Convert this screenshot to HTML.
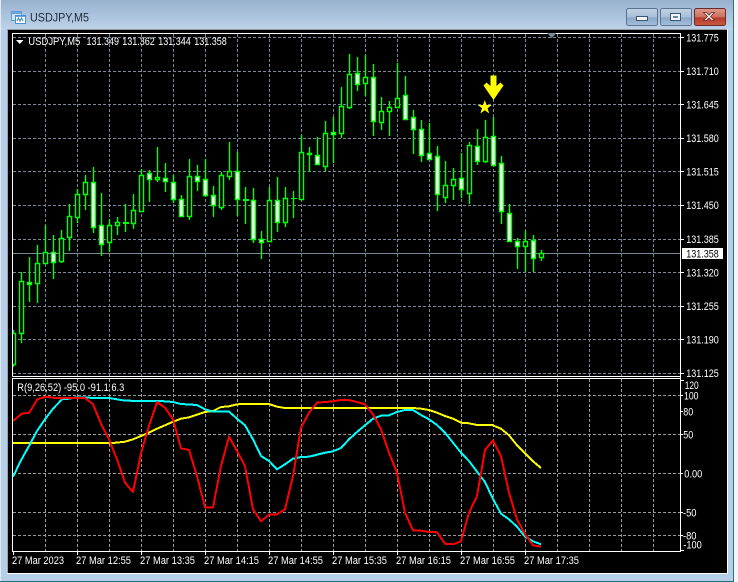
<!DOCTYPE html>
<html><head><meta charset="utf-8"><title>USDJPY,M5</title>
<style>
html,body{margin:0;padding:0;background:#fff;width:738px;height:582px;overflow:hidden}
svg{display:block;position:absolute;left:0;top:0}
text{font-family:"Liberation Sans",sans-serif}
</style></head><body>
<svg width="738" height="582" viewBox="0 0 738 582" xmlns="http://www.w3.org/2000/svg">
<defs>
<linearGradient id="tb" x1="0" y1="0" x2="0" y2="1"><stop offset="0" stop-color="#97b1ce"/><stop offset="1" stop-color="#bed3e9"/></linearGradient>
<linearGradient id="btn" x1="0" y1="0" x2="0" y2="1"><stop offset="0" stop-color="#c3d3e5"/><stop offset=".5" stop-color="#a8bfd8"/><stop offset=".55" stop-color="#8ba8c8"/><stop offset="1" stop-color="#a5bfdc"/></linearGradient>
<linearGradient id="cls" x1="0" y1="0" x2="0" y2="1"><stop offset="0" stop-color="#dc9c8f"/><stop offset=".5" stop-color="#cd6f5f"/><stop offset=".55" stop-color="#b83a28"/><stop offset="1" stop-color="#c85a44"/></linearGradient>
<clipPath id="cm"><rect x="13" y="34" width="667" height="342"/></clipPath>
<clipPath id="cl"><rect x="13" y="379" width="667" height="172"/></clipPath>
</defs>

<!-- window frame -->
<rect x="0" y="0" width="734" height="582" fill="#b6cfe9"/>
<rect x="0" y="0" width="734" height="30" fill="url(#tb)"/>
<rect x="0" y="0" width="1" height="582" fill="#e4e9ef"/>
<rect x="733" y="0" width="1" height="582" fill="#2f6f80"/>
<rect x="734" y="0" width="4" height="582" fill="#f4f6f8"/>
<rect x="0" y="581" width="734" height="1" fill="#1f6f80"/>
<rect x="7" y="29" width="721" height="1" fill="#8f979f"/>
<rect x="7" y="29" width="1" height="545" fill="#9aa3ac"/>
<rect x="7" y="573" width="721" height="1" fill="#fff"/>
<rect x="727" y="29" width="1" height="545" fill="#fff"/>
<rect x="8" y="30" width="719" height="543" fill="#000"/>

<!-- title icon -->
<rect x="11.500" y="11.500" width="10" height="9" fill="#cfe2f5" stroke="#5f9ad6"/>
<rect x="15.500" y="15.500" width="10" height="8" fill="#fff" stroke="#4a8fd4"/>
<path d="M17 21l1.500-3 1.500 3 1.500-3 1.500 3" fill="none" stroke="#3b7fc4"/>
<rect x="12" y="12" width="9" height="2" fill="#6ea6dc"/>
<rect x="16" y="16" width="9" height="1" fill="#6ea6dc"/>
<text x="30" y="21.500" font-size="12" fill="#1c2c3e" textLength="59" lengthAdjust="spacingAndGlyphs">USDJPY,M5</text>

<!-- window buttons -->
<rect x="626.500" y="8.500" width="31" height="17" rx="2" fill="url(#btn)" stroke="#5a7391"/>
<rect x="636.500" y="16.500" width="11" height="4" fill="#f2f5f8" stroke="#3f5670"/>
<rect x="660.500" y="8.500" width="31" height="17" rx="2" fill="url(#btn)" stroke="#5a7391"/>
<rect x="670.500" y="13.500" width="10" height="7" fill="#f2f5f8" stroke="#3f5670"/>
<rect x="673" y="16" width="5" height="2" fill="#6d87a5"/>
<rect x="694.500" y="8.500" width="31" height="17" rx="2" fill="url(#cls)" stroke="#6a2a2a"/>
<path d="M703.500 12.500l3 0 2.500 2.500 2.500-2.500 3 0-4 4 4 4-3 0-2.500-2.500-2.500 2.500-3 0 4-4z" fill="#f6f2f0" stroke="#6e2a22" stroke-width=".8"/>

<!-- main pane grid -->
<g shape-rendering="crispEdges">
<path d="M13 37.500H680M13 71.500H680M13 104.500H680M13 138.500H680M13 171.500H680M13 205.500H680M13 239.500H680M13 272.500H680M13 306.500H680M13 339.500H680M13 373.500H680" stroke="#778899" stroke-dasharray="3 2" fill="none"/>
<path d="M45.500 34V376M77.500 34V376M109.500 34V376M141.500 34V376M173.500 34V376M205.500 34V376M237.500 34V376M269.500 34V376M301.500 34V376M333.500 34V376M365.500 34V376M397.500 34V376M429.500 34V376M461.500 34V376M493.500 34V376M525.500 34V376M557.500 34V376M589.500 34V376M621.500 34V376M653.500 34V376" stroke="#778899" stroke-dasharray="3 2" fill="none"/>
<rect x="13" y="253" width="667" height="1" fill="#778899"/>
</g>

<!-- candles -->
<g clip-path="url(#cm)" stroke-width="1.400">
<path stroke="#00ff00" fill="none" d="M13.500 330V367M21.500 272V343M29.500 257V302M37.500 245V303M45.500 225V264M53.500 235V279M61.500 230V263M69.500 204V251M77.500 189V223M85.500 175V210M93.500 167V233M101.500 193V256M109.500 219V252M117.500 217V235M125.500 204V232M133.500 194V229M141.500 169V211M149.500 170V202M157.500 147V182M165.500 163V192M173.500 175V203M181.500 195V217M189.500 159V220M197.500 165V191M205.500 159V197M213.500 186V217M221.500 172V210M229.500 142V180M237.500 152V216M245.500 187V224M253.500 188V243M261.500 231V259M269.500 187V240M277.500 177V232M285.500 187V227M293.500 191V218M301.500 135V200M309.500 147V172M317.500 137V165M325.500 121V171M333.500 117V163M341.500 87V138M349.500 54V109M357.500 57V91M365.500 55V96M373.500 64V136M381.500 97V130M389.500 101V136M397.500 63V107M405.500 76V119M413.500 110V154M421.500 120V162M429.500 123V160M437.500 146V211M445.500 161V203M453.500 168V200M461.500 153V198M469.500 142V204M477.500 129V165M485.500 120V163M493.500 117V166M501.500 156V224M509.500 204V242M517.500 238V269M525.500 231V272M533.500 235V272M541.500 250V261"/>
<!-- hollow -->
<path stroke="#00ff00" fill="#000" d="M11.500 333.500h4v31h-4zM19.500 281.500h4v52h-4zM35.500 263.500h4v20h-4zM43.500 252.500h4v11h-4zM59.500 238.500h4v23h-4zM67.500 216.500h4v21h-4zM75.500 194.500h4v23h-4zM83.500 182.500h4v12h-4zM107.500 225.500h4v17h-4zM115.500 222.500h4v3h-4zM131.500 210.500h4v13h-4zM139.500 175.500h4v36h-4zM155.500 177.500h4v2h-4zM187.500 176.500h4v40h-4zM219.500 175.500h4v32h-4zM227.500 171.500h4v5h-4zM267.500 200.500h4v41h-4zM283.500 198.500h4v24h-4zM299.500 152.500h4v47h-4zM323.500 133.500h4v33h-4zM339.500 106.500h4v27h-4zM347.500 74.500h4v33h-4zM363.500 77.500h4v6h-4zM379.500 111.500h4v11h-4zM387.500 107.500h4v4h-4zM395.500 98.500h4v9h-4zM443.500 185.500h4v12h-4zM451.500 179.500h4v6h-4zM467.500 145.500h4v48h-4zM483.500 137.500h4v24h-4zM523.500 241.500h4v5h-4zM539.500 253.500h4v4h-4z"/>
<!-- white bodies -->
<path stroke="#00ff00" fill="#fff" d="M27.500 282.500h4v2h-4zM51.500 252.500h4v10h-4zM91.500 182.500h4v45h-4zM99.500 225.500h4v19h-4zM147.500 173.500h4v6h-4zM163.500 178.500h4v3h-4zM171.500 182.500h4v17h-4zM179.500 199.500h4v17h-4zM195.500 176.500h4v5h-4zM203.500 179.500h4v16h-4zM211.500 195.500h4v10h-4zM235.500 171.500h4v28h-4zM251.500 200.500h4v39h-4zM259.500 239.500h4v3h-4zM275.500 200.500h4v22h-4zM307.500 153.500h4v1h-4zM315.500 155.500h4v9h-4zM331.500 132.500h4v2h-4zM355.500 73.500h4v11h-4zM371.500 77.500h4v44h-4zM403.500 95.500h4v24h-4zM411.500 117.500h4v12h-4zM419.500 129.500h4v26h-4zM427.500 153.500h4v6h-4zM435.500 156.500h4v38h-4zM459.500 178.500h4v11h-4zM475.500 146.500h4v15h-4zM491.500 136.500h4v29h-4zM499.500 163.500h4v48h-4zM507.500 213.500h4v28h-4zM515.500 241.500h4v5h-4zM531.500 240.500h4v18h-4z"/>
<!-- doji -->
<path fill="#00ff00" stroke="none" d="M123 222h6v2h-6zM243 199h6v2h-6zM291 198h6v1h-6z"/>
</g>

<!-- arrow + star -->
<path d="M490.500 75.500H496.500V86L500.500 82.500L503.500 85.500L493.500 100L483.500 85.500L486.500 82.500L490.500 86Z" fill="#ffff00"/>
<path d="M484.800 100l1.800 5h5.200l-4.200 3.200 1.600 5.300-4.400-3.200-4.400 3.200 1.600-5.300-4.200-3.200h5.200z" fill="#ffff00"/>

<!-- lower pane grid -->
<g shape-rendering="crispEdges">
<path d="M13 395.500H680M13 434.500H680M13 473.500H680M13 512.500H680M13 535.500H680" stroke="#9a9a9a" stroke-dasharray="3 2" fill="none"/>
<path d="M45.500 379V551M77.500 379V551M109.500 379V551M141.500 379V551M173.500 379V551M205.500 379V551M237.500 379V551M269.500 379V551M301.500 379V551M333.500 379V551M365.500 379V551M397.500 379V551M429.500 379V551M461.500 379V551M493.500 379V551M525.500 379V551M557.500 379V551M589.500 379V551M621.500 379V551M653.500 379V551" stroke="#9a9a9a" stroke-dasharray="3 2" fill="none"/>
</g>

<!-- indicator lines -->
<g clip-path="url(#cl)" fill="none" stroke-width="2" stroke-linejoin="round" shape-rendering="crispEdges">
<polyline stroke="#ffff00" points="13,443 113,443 125,441.700 133,439.300 141,436 149,432.700 157,428.700 165,425.300 173,421.700 181,418.700 189,417.300 197,414.700 205,412 213,411 221,407 229,406.300 237,404.300 246,404 269,404 277,406.700 285,408 413,408 421,408.700 429,410 437,412.700 445,416 453,418.700 461,422.700 469,423.300 477,425 492,425 501,428.700 509,435.300 517,445.300 525,453.300 533,461.300 541,468"/>
<polyline stroke="#00ffff" points="13,476.700 21,460.300 29,446 37,431 45,419.300 53,408.700 62,399.300 69,398.700 77,397.300 85,397.300 93,398 109,398 117,399.300 125,400.700 157,401 165,401.300 173,402 181,404 197,405 205,409.300 213,411.700 229,411.700 237,418.700 245,425.300 253,439.300 261,456 269,461 277,469.300 285,464.300 293,458.700 301,457 309,456.700 317,454.700 325,452.700 333,451.300 341,448 349,439.300 357,432 365,425.300 373,418.700 381,415.700 389,415.300 397,412 405,410 413,410 421,415 429,419.300 437,425 445,432.700 453,442.700 461,452.700 469,461 477,471.700 485,482 493,499 501,513.700 509,519.300 517,526.700 525,536.700 533,541.300 541,544.300"/>
<polyline stroke="#ff0000" points="13,421 21.700,413.700 29.300,412.700 37.300,399.300 45.300,396.700 53,397.700 61,398.300 69,398 85,398 93,404.300 101,423.700 109,439.300 117,459.300 125,482.700 133,492 141,453.300 149,426 157,402 165,407.700 173,419.300 181,448.300 189,450 197,476 205,507.300 213,507.300 221,466 229,436.700 237,451 245,466 253,509.300 261,521.300 269,514.700 277,514.300 285,509.300 293,476 301,427.700 309,412.700 317,402.700 325,402 333,401.300 341,400 349,400 357,402 365,404.300 373,414.300 381,429.300 389,452.700 397,472.700 405,512.700 413,530.300 421,530.700 429,532 437,532 445,543.700 453,544.300 461,541.300 469,512.700 477,496 485,450 493,440.300 501,456 509,492.700 517,519.300 525,534.300 533,545.300 541,546.700"/>
</g>

<!-- frames and ticks -->
<g shape-rendering="crispEdges" fill="none" stroke="#fff">
<path d="M12.500 376.500V33.500H680.500V551.500H12.500V378.500H680.500M12.500 376.500H680.500"/>
<path d="M681 37.500h3M681 71.500h3M681 104.500h3M681 138.500h3M681 171.500h3M681 205.500h3M681 239.500h3M681 272.500h3M681 306.500h3M681 339.500h3M681 373.500h3M681 380.500h3M681 395.500h2M681 411.500h2M681 434.500h2M681 473.500h2M681 512.500h2M681 535.500h2M681 550.500h3"/>
<path d="M13.500 552v3M77.500 552v3M141.500 552v3M205.500 552v3M269.500 552v3M333.500 552v3M397.500 552v3M461.500 552v3M525.500 552v3"/>
</g>
<path d="M547 33h9.500l-4.700 5z" fill="#778899"/>
<path d="M16 40h7.500l-3.700 4z" fill="#fff"/>

<!-- chart header text -->
<g font-size="11" fill="#fff">
<text x="28.300" y="45" textLength="52" lengthAdjust="spacingAndGlyphs">USDJPY,M5</text>
<text x="86.500" y="45" textLength="32.500" lengthAdjust="spacingAndGlyphs">131.349</text>
<text x="122.300" y="45" textLength="32.500" lengthAdjust="spacingAndGlyphs">131.362</text>
<text x="158.300" y="45" textLength="32.500" lengthAdjust="spacingAndGlyphs">131.344</text>
<text x="194.300" y="45" textLength="32.500" lengthAdjust="spacingAndGlyphs">131.358</text>
<text x="17.300" y="391" textLength="107" lengthAdjust="spacingAndGlyphs">R(9,26,52) -95.0 -91.1 6.3</text>
</g>

<!-- price axis -->
<rect x="682" y="248" width="41" height="11" fill="#fff"/>
<g font-size="11" fill="#fff">
<text x="686.300" y="41.500" textLength="32.500" lengthAdjust="spacingAndGlyphs">131.775</text>
<text x="686.300" y="75" textLength="32.500" lengthAdjust="spacingAndGlyphs">131.710</text>
<text x="686.300" y="108.500" textLength="32.500" lengthAdjust="spacingAndGlyphs">131.645</text>
<text x="686.300" y="142" textLength="32.500" lengthAdjust="spacingAndGlyphs">131.580</text>
<text x="686.300" y="175.500" textLength="32.500" lengthAdjust="spacingAndGlyphs">131.515</text>
<text x="686.300" y="209" textLength="32.500" lengthAdjust="spacingAndGlyphs">131.450</text>
<text x="686.300" y="243" textLength="32.500" lengthAdjust="spacingAndGlyphs">131.385</text>
<text x="686.300" y="257.500" textLength="32.500" lengthAdjust="spacingAndGlyphs" fill="#000">131.358</text>
<text x="686.300" y="276.500" textLength="32.500" lengthAdjust="spacingAndGlyphs">131.320</text>
<text x="686.300" y="310" textLength="32.500" lengthAdjust="spacingAndGlyphs">131.255</text>
<text x="686.300" y="343.500" textLength="32.500" lengthAdjust="spacingAndGlyphs">131.190</text>
<text x="686.300" y="377" textLength="32.500" lengthAdjust="spacingAndGlyphs">131.125</text>
<text x="684.700" y="389" textLength="14" lengthAdjust="spacingAndGlyphs">120</text>
<text x="684" y="399.500" textLength="14.500" lengthAdjust="spacingAndGlyphs">100</text>
<text x="683.300" y="415.500" textLength="10" lengthAdjust="spacingAndGlyphs">80</text>
<text x="683.300" y="438.500" textLength="10" lengthAdjust="spacingAndGlyphs">50</text>
<text x="684.300" y="477.500" textLength="18" lengthAdjust="spacingAndGlyphs">0.00</text>
<text x="683" y="516.500" textLength="13.500" lengthAdjust="spacingAndGlyphs">-50</text>
<text x="683" y="539.500" textLength="13.500" lengthAdjust="spacingAndGlyphs">-80</text>
<text x="683.300" y="548.700" textLength="18.500" lengthAdjust="spacingAndGlyphs">-100</text>
</g>

<!-- time axis -->
<g font-size="11" fill="#fff">
<text x="12" y="564" textLength="52" lengthAdjust="spacingAndGlyphs">27 Mar 2023</text>
<text x="76" y="564" textLength="55" lengthAdjust="spacingAndGlyphs">27 Mar 12:55</text>
<text x="140" y="564" textLength="55" lengthAdjust="spacingAndGlyphs">27 Mar 13:35</text>
<text x="204" y="564" textLength="55" lengthAdjust="spacingAndGlyphs">27 Mar 14:15</text>
<text x="268" y="564" textLength="55" lengthAdjust="spacingAndGlyphs">27 Mar 14:55</text>
<text x="332" y="564" textLength="55" lengthAdjust="spacingAndGlyphs">27 Mar 15:35</text>
<text x="396" y="564" textLength="55" lengthAdjust="spacingAndGlyphs">27 Mar 16:15</text>
<text x="460" y="564" textLength="55" lengthAdjust="spacingAndGlyphs">27 Mar 16:55</text>
<text x="524" y="564" textLength="55" lengthAdjust="spacingAndGlyphs">27 Mar 17:35</text>
</g>
</svg>
</body></html>
